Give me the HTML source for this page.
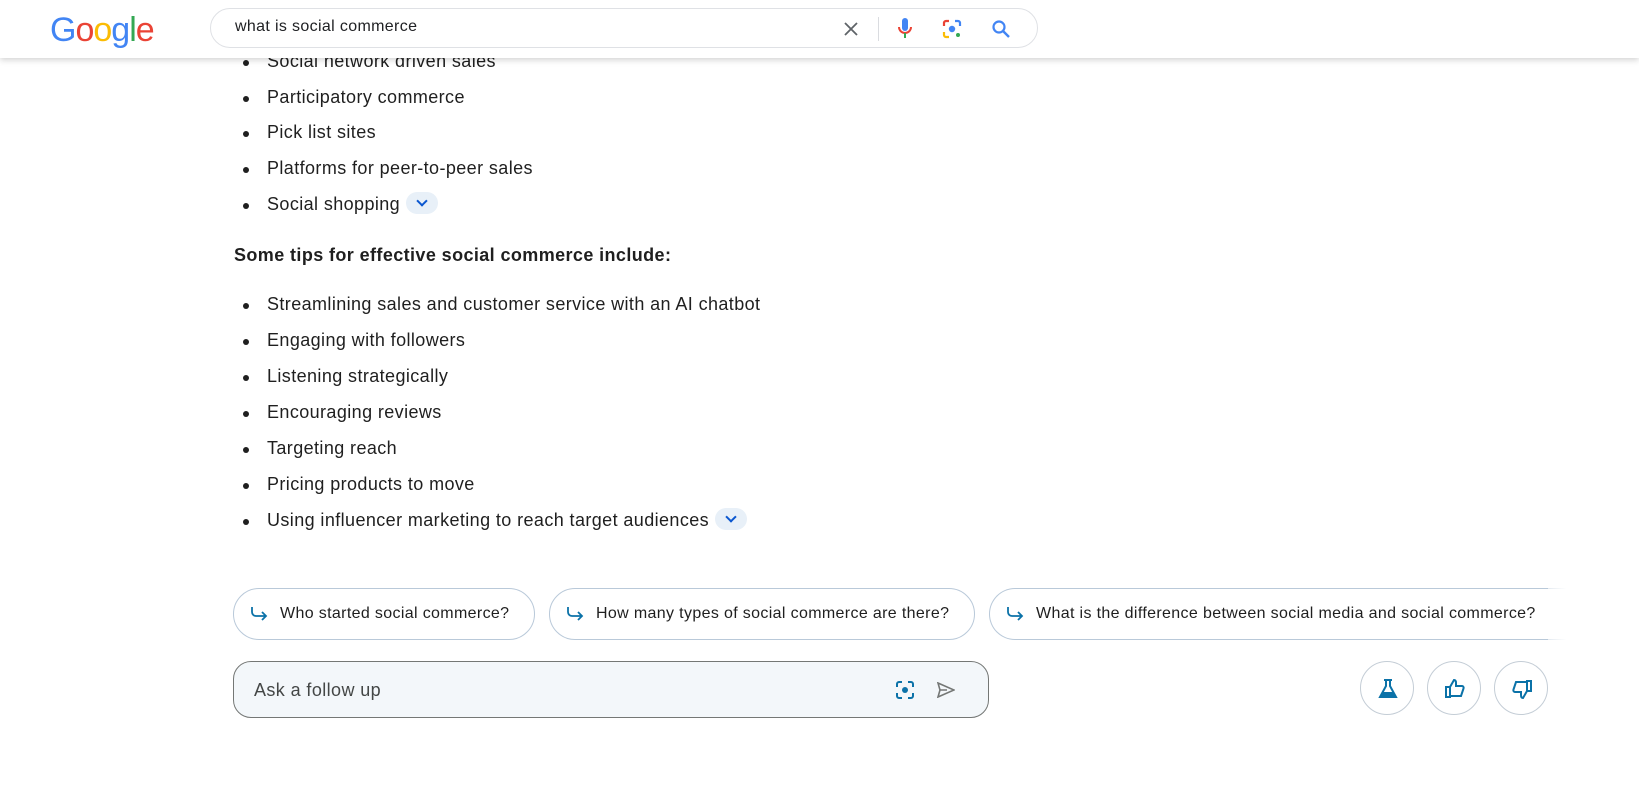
<!DOCTYPE html>
<html><head><style>
body{margin:0;width:1639px;height:787px;overflow:hidden;background:#fff;font-family:"Liberation Sans",Arial,sans-serif;color:#1f1f1f;position:relative}
.hdr{position:absolute;left:0;top:0;width:1639px;height:58px;background:#fff;box-shadow:0 2px 6px rgba(0,0,0,.18);z-index:5}
.logo{position:absolute;left:50px;top:11px;font-size:34px;letter-spacing:-1px;font-family:"Liberation Sans",sans-serif}
.sb{position:absolute;left:210px;top:8px;width:826px;height:38px;border:1px solid #dfe1e5;border-radius:20px}
.sb .q{position:absolute;left:24px;top:9px;font-size:16px;color:#202124;letter-spacing:.35px}
.li{position:absolute;left:267px;font-size:18px;color:#1f1f1f;letter-spacing:.4px}
.li:before{content:"";position:absolute;left:-24px;top:9px;width:6px;height:6px;border-radius:50%;background:#1f1f1f}
.exp{display:inline-block;width:32px;height:22px;border-radius:11px;background:#e8f0f8;vertical-align:middle;margin-left:6px;position:relative;top:-2px}
.exp:after{content:"";position:absolute;left:12px;top:5px;width:6px;height:6px;border-right:2px solid #0b57d0;border-bottom:2px solid #0b57d0;transform:rotate(45deg)}
.chip{position:absolute;top:588px;height:52px;border:1px solid #b9c9d9;border-radius:27px;box-sizing:border-box;font-size:16px;line-height:50px;padding-left:46px;color:#1f1f1f;white-space:nowrap;overflow:hidden;letter-spacing:.35px}
.chip svg{position:absolute;left:16px;top:17px}
.inp{position:absolute;left:233px;top:661px;width:756px;height:57px;box-sizing:border-box;border:1px solid #747775;border-radius:18px;background:#f3f7fa}
.circ{position:absolute;top:661px;width:54px;height:54px;box-sizing:border-box;border:1px solid #c4cdd6;border-radius:50%}
.circ svg{position:absolute;left:15px;top:15px}
</style></head><body>
<div class="hdr">
<div class="logo"><span style="color:#4285f4">G</span><span style="color:#ea4335">o</span><span style="color:#fbbc05">o</span><span style="color:#4285f4">g</span><span style="color:#34a853">l</span><span style="color:#ea4335">e</span></div>
<div class="sb"><div class="q">what is social commerce</div>
<svg style="position:absolute;left:632px;top:12px" width="16" height="16" viewBox="0 0 16 16"><path d="M2 2L14 14M14 2L2 14" stroke="#5f6368" stroke-width="1.8"/></svg>
<div style="position:absolute;left:667px;top:8px;width:1px;height:24px;background:#dadce0"></div>
<svg style="position:absolute;left:686px;top:8px" width="16" height="24" viewBox="0 0 16 24"><rect x="5" y="1" width="6" height="13" rx="3" fill="#4285f4"/><path d="M2 10a6 6 0 0 0 12 0" stroke="#ea4335" stroke-width="2" fill="none"/><path d="M8 16v5" stroke="#34a853" stroke-width="2"/></svg>
<svg style="position:absolute;left:731px;top:10px" width="20" height="20" viewBox="0 0 20 20"><path d="M2 7V4a2 2 0 0 1 2-2h3" stroke="#ea4335" stroke-width="2.2" fill="none"/><path d="M13 2h3a2 2 0 0 1 2 2v3" stroke="#4285f4" stroke-width="2.2" fill="none"/><path d="M2 13v3a2 2 0 0 0 2 2h3" stroke="#fbbc05" stroke-width="2.2" fill="none"/><circle cx="10" cy="10" r="3.2" fill="#4285f4"/><circle cx="16" cy="16" r="2" fill="#34a853"/></svg>
<svg style="position:absolute;left:780px;top:10px" width="20" height="20" viewBox="0 0 20 20"><circle cx="8" cy="8" r="5.5" stroke="#4285f4" stroke-width="2.2" fill="none"/><path d="M12 12l6 6" stroke="#4285f4" stroke-width="2.4"/></svg>
</div>
</div>
<div class="li" style="top:51px">Social network driven sales</div>
<div class="li" style="top:87px">Participatory commerce</div>
<div class="li" style="top:122px">Pick list sites</div>
<div class="li" style="top:158px">Platforms for peer-to-peer sales</div>
<div class="li" style="top:194px">Social shopping<span class="exp"></span></div>
<div style="position:absolute;left:234px;top:245px;font-size:18px;font-weight:bold;letter-spacing:.4px">Some tips for effective social commerce include:</div>
<div class="li" style="top:294px">Streamlining sales and customer service with an AI chatbot</div>
<div class="li" style="top:330px">Engaging with followers</div>
<div class="li" style="top:366px">Listening strategically</div>
<div class="li" style="top:402px">Encouraging reviews</div>
<div class="li" style="top:438px">Targeting reach</div>
<div class="li" style="top:474px">Pricing products to move</div>
<div class="li" style="top:510px">Using influencer marketing to reach target audiences<span class="exp"></span></div>
<div class="chip" style="left:233px;width:302px"><svg width="18" height="16" viewBox="0 0 18 16"><path d="M2 1v5a4 4 0 0 0 4 4h10M12 6l4 4-4 4" stroke="#0b72a8" stroke-width="1.8" fill="none"/></svg>Who started social commerce?</div>
<div class="chip" style="left:549px;width:426px"><svg width="18" height="16" viewBox="0 0 18 16"><path d="M2 1v5a4 4 0 0 0 4 4h10M12 6l4 4-4 4" stroke="#0b72a8" stroke-width="1.8" fill="none"/></svg>How many types of social commerce are there?</div>
<div class="chip" style="left:989px;width:580px;border-right:none;border-radius:27px 0 0 27px"><svg width="18" height="16" viewBox="0 0 18 16"><path d="M2 1v5a4 4 0 0 0 4 4h10M12 6l4 4-4 4" stroke="#0b72a8" stroke-width="1.8" fill="none"/></svg>What is the difference between social media and social commerce?</div>
<div style="position:absolute;left:1548px;top:585px;width:91px;height:60px;background:linear-gradient(to right,rgba(255,255,255,.6),#fff 20%)"></div>
<div class="inp"><div style="position:absolute;left:20px;top:18px;font-size:18px;color:#444746;letter-spacing:.4px">Ask a follow up</div>
<svg style="position:absolute;left:661px;top:18px" width="20" height="20" viewBox="0 0 20 20"><path d="M2 7V4a2 2 0 0 1 2-2h3M13 2h3a2 2 0 0 1 2 2v3M2 13v3a2 2 0 0 0 2 2h3M13 18h3a2 2 0 0 0 2-2v-3" stroke="#0b72a8" stroke-width="2" fill="none"/><circle cx="10" cy="10" r="3" fill="#0b72a8"/></svg>
<svg style="position:absolute;left:703px;top:20px" width="18" height="16" viewBox="0 0 18 16"><path d="M1 1L17 8L1 15L3 8Z M3 8H10" stroke="#747775" stroke-width="1.6" fill="none"/></svg>
</div>
<div class="circ" style="left:1360px"><svg width="24" height="24" viewBox="0 0 24 24"><path d="M8 3h8M10 3v6L4 20h16L14 9V3" stroke="#0b72a8" stroke-width="2" fill="none"/><path d="M7 15h10l2 4H5z" fill="#0b72a8"/></svg></div>
<div class="circ" style="left:1427px"><svg width="24" height="24" viewBox="0 0 24 24"><path d="M3 10h4v10H3zM7 10l4-7c2 0 2 2 2 3v3h6c1 0 2 1 1.5 2.5L18 19H7" stroke="#0b72a8" stroke-width="2" fill="none"/></svg></div>
<div class="circ" style="left:1494px"><svg width="24" height="24" viewBox="0 0 24 24"><path d="M21 14h-4V4h4zM17 14l-4 7c-2 0-2-2-2-3v-3H5c-1 0-2-1-1.5-2.5L6 5h11" stroke="#0b72a8" stroke-width="2" fill="none"/></svg></div>
</body></html>
